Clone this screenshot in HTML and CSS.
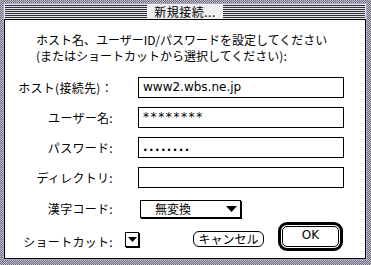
FILE: index.html
```html
<!DOCTYPE html>
<html lang="ja">
<head>
  <meta charset="UTF-8">
  <title>新規接続...</title>
  <link rel="stylesheet" href="styles.css">
</head>
<body>

  <div class="window">
    <div class="frame">
      <div class="titlebar"><span class="title">新規接続...</span></div>

      <div class="dialog">
        <p class="message">ホスト名、ユーザーID/パスワードを設定してください<br>(またはショートカットから選択してください):</p>

        <div class="form">
          <label class="label">ホスト(接続先)：</label>
          <div class="field">www2.wbs.ne.jp</div>

          <label class="label">ユーザー名:</label>
          <div class="field stars">********</div>

          <label class="label">パスワード:</label>
          <div class="field dots">........</div>

          <label class="label">ディレクトリ:</label>
          <div class="field"></div>

          <label class="label kanji">漢字コード:</label>
          <div class="popup">
            <span>無変換</span>
            <svg class="arrow" width="11" height="6" viewBox="0 0 11 6"><polygon points="0,0 11,0 5.5,6" /></svg>
          </div>
        </div>

        <div class="actions">
          <span class="label shortcut-label">ショートカット:</span>
          <div class="mini-popup">
            <svg class="arrow" width="9" height="5" viewBox="0 0 9 5"><polygon points="0,0 9,0 4.5,5" /></svg>
          </div>
          <div class="btn cancel">キャンセル</div>
          <div class="btn-ok"><span>OK</span></div>
        </div>
      </div>
    </div>
  </div>

</body>
</html>
```

FILE: styles.css
```css
body {
  margin: 0;
  padding: 0;
  background: #fff;
  font-family: "Noto Sans CJK JP", "DejaVu Sans", sans-serif;
  font-size: 12px;
  color: #000;
}

.window {
  width: 371px;
  height: 265px;
  box-sizing: border-box;
  padding: 3px 4px 5px 3px;
  background: repeating-conic-gradient(#6a6a78 0 25%, #c4c4cc 0 50%) 0 0 / 2px 2px;
}

.frame {
  height: 100%;
  box-sizing: border-box;
  border: 1px solid #a8a8d8;
  background: #e4e4ec;
  display: flex;
  flex-direction: column;
}

/* striped title bar */
.titlebar {
  height: 15px;
  box-sizing: border-box;
  padding: 1px;
  background: repeating-linear-gradient(to bottom, #e4e4ec 0 1px, #303030 1px 2px);
  background-clip: content-box;
  display: flex;
  justify-content: center;
  align-items: center;
}

.title {
  background: #eeeeee;
  padding: 0 7px;
  line-height: 15px;
  font-size: 12px;
  letter-spacing: 0.5px;
}

.dialog {
  flex: 1;
  border: 1px solid #000;
  background: #fff;
  display: flex;
  flex-direction: column;
}

.message {
  margin: 12px 0 0 31px;
  line-height: 16px;
}

.form {
  margin-top: 13px;
  display: grid;
  grid-template-columns: 108px 206px;
  column-gap: 25px;
  row-gap: 9px;
}

.label {
  text-align: right;
  align-self: center;
  line-height: 16px;
  letter-spacing: 0.3px;
}

.field {
  height: 21px;
  box-sizing: border-box;
  border: 1px solid #000;
  padding-left: 4px;
  font-family: "DejaVu Sans", sans-serif;
  font-size: 12px;
  line-height: 19px;
}

.stars {
  letter-spacing: 1.6px;
}

.dots {
  font-weight: bold;
  letter-spacing: 1.4px;
}

.kanji {
  margin-top: 3px;
}

.popup {
  margin: 3px 0 0 2px;
  width: 101px;
  height: 18px;
  box-sizing: border-box;
  border: 1px solid #000;
  box-shadow: 1px 1px 0 #000;
  padding: 0 3px 0 14px;
  display: flex;
  align-items: center;
  justify-content: space-between;
  line-height: 16px;
}

.arrow {
  display: block;
  fill: #000;
}

.actions {
  margin-top: 4px;
  display: flex;
  align-items: flex-start;
}

.shortcut-label {
  width: 108px;
  margin-top: 10px;
}

.mini-popup {
  margin: 10px 0 0 12px;
  width: 14px;
  height: 15px;
  box-sizing: border-box;
  border: 1px solid #000;
  box-shadow: 1px 1px 0 #000;
  display: flex;
  align-items: center;
  justify-content: center;
}

.btn {
  box-sizing: border-box;
  border: 1px solid #000;
  border-radius: 6px;
  text-align: center;
}

.cancel {
  margin: 9px 0 0 54px;
  width: 71px;
  height: 16px;
  line-height: 14px;
}

.btn-ok {
  margin-left: 14px;
  width: 65px;
  height: 29px;
  box-sizing: border-box;
  border: 3px solid #000;
  border-radius: 9px;
  padding: 1px;
}

.btn-ok span {
  display: block;
  height: 100%;
  box-sizing: border-box;
  border: 1px solid #000;
  border-radius: 5px;
  text-align: center;
  font-family: "DejaVu Sans", sans-serif;
  font-size: 12px;
  line-height: 17px;
}
```
